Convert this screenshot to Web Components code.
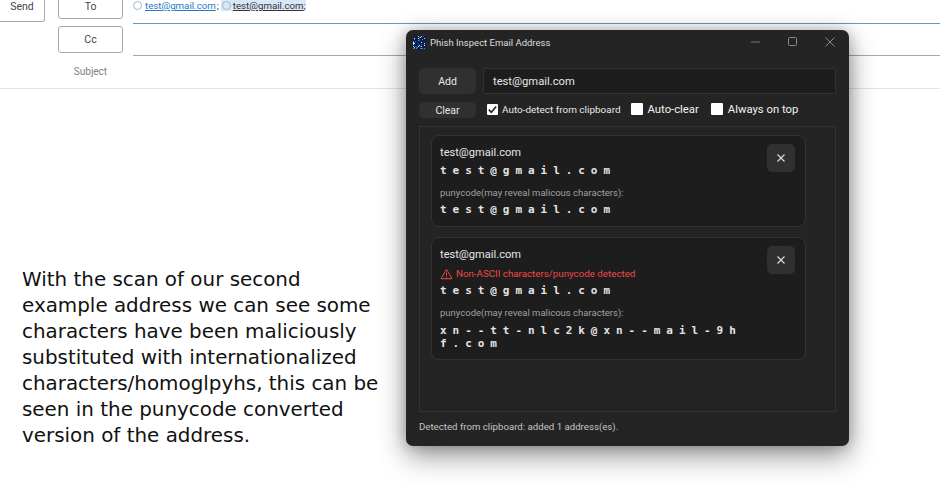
<!DOCTYPE html>
<html>
<head>
<meta charset="utf-8">
<title>Phish Inspect</title>
<style>
  html, body { margin: 0; height: 502px; overflow: hidden; background: #fff; }
  body { position: relative; font-family: Roboto, sans-serif; }
</style>
</head>
<body>
<mail-header></mail-header>
<note-text>With the scan of our second<br>example address we can see some<br>characters have been maliciously<br>substituted with internationalized<br>characters/homoglpyhs, this can be<br>seen in the punycode converted<br>version of the address.</note-text>

<app-window>
  <addr-card name="test@gmail.com" shown="test@gmail.com" puny="test@gmail.com"></addr-card>
  <addr-card warn name="test@gmail.com" shown="test@gmail.com" puny="xn--tt-nlc2k@xn--mail-9h f.com"></addr-card>
</app-window>

<script>
// Outlook compose header behind the app window
class MailHeader extends HTMLElement {
  connectedCallback() {
    const root = this.attachShadow({ mode: "open" });
    root.innerHTML = `
      <style>
        :host { display: block; height: 89px; box-sizing: border-box; border-bottom: 1px solid #e4e4e4;
          font: 10.5px Roboto, sans-serif; color: #444; overflow: hidden; }
        .wrap { display: grid; grid-template-columns: 45px 78px 1fr; margin-top: -8px; height: 97px; }
        .btn { box-sizing: border-box; border: 1px solid #a9a9a9; border-radius: 3px; background: #fff;
          display: flex; align-items: center; justify-content: center; }
        .send { height: 30px; border-left: 0; border-radius: 0 3px 3px 0; padding-top: 9px; padding-bottom: 10px; line-height: 9px; }
        .col { display: flex; flex-direction: column; align-items: center; padding-left: 13px; }
        .to { width: 65px; height: 27px; padding-top: 2px; }
        .cc { width: 65px; height: 27px; margin-top: 7px; }
        .subj { margin-top: 13px; color: #808080; font-size: 10px; }
        .lines { padding-left: 10px; }
        .row { height: 32px; box-sizing: border-box; border-bottom: 1px solid #5b9bd5;
          display: flex; align-items: flex-start; gap: 1px; font-size: 9.7px; padding: 8px 0 0; line-height: 11px; }
        .row2 { height: 32px; border-bottom: 1px solid #a8a8a8; }
        .dot { width: 7px; height: 7px; border: 1px solid #9fb6cc; border-radius: 50%; margin: 1px 0 0 0; }
        a { color: #1f78c8; text-decoration: underline; margin-left: 2px; }
        .sel { background: #d9e8f6; display: flex; align-items: flex-start; margin-left: 1px; padding-left: 1px; }
        .sel u { color: #333; margin-left: 2px; }
      </style>
      <div class="wrap">
        <div><div class="btn send">Send</div></div>
        <div class="col">
          <div class="btn to">To</div>
          <div class="btn cc">Cc</div>
          <div class="subj">Subject</div>
        </div>
        <div class="lines">
          <div class="row"><span class="dot"></span><a>test@gmail.com</a>;
            <span class="sel"><span class="dot"></span><u>test@gmail.com</u>;</span></div>
          <div class="row row2"></div>
        </div>
      </div>`;
  }
}

class NoteText extends HTMLElement {
  connectedCallback() {
    const root = this.attachShadow({ mode: "open" });
    root.innerHTML = `
      <style>
        :host { display: block; margin: 178px 0 0 22px; width: 370px;
          font: 19.9px/26px "DejaVu Sans", Verdana, sans-serif; color: #111; white-space: nowrap; }
      </style>
      <slot></slot>`;
  }
}

class UiCheck extends HTMLElement {
  connectedCallback() {
    const root = this.attachShadow({ mode: "open" });
    const on = this.hasAttribute("checked");
    root.innerHTML = `
      <style>
        :host { display: inline-flex; align-items: center; color: #e8e8e8; white-space: nowrap; }
        .box { box-sizing: border-box; background: #fff; border-radius: 1px; display: block; flex: none;
          width: var(--box, 12px); height: var(--box, 12px); margin-right: var(--gap, 5px); }
        svg { display: block; width: 100%; height: 100%; }
      </style>
      <span class="box">${on ? '<svg viewBox="0 0 12 12"><path d="M2 6.2 4.7 9 10 2.8" fill="none" stroke="#222" stroke-width="1.8"/></svg>' : ""}</span>
      <slot></slot>`;
  }
}

class AddrCard extends HTMLElement {
  connectedCallback() {
    const root = this.attachShadow({ mode: "open" });
    const warn = this.hasAttribute("warn");
    const name = this.getAttribute("name");
    const shown = this.getAttribute("shown");
    const puny = this.getAttribute("puny");
    root.innerHTML = `
      <style>
        :host { display: block; position: relative; box-sizing: border-box; width: 375px; background: #1d1d1d;
          border: 1px solid #333; border-radius: 8px; padding: 9px 8px 1px 8px; color: #e6e6e6; }
        .name { font-size: 11.1px; line-height: 16px; }
        .warn { font-size: 9.75px; line-height: 14px; color: #f04848; display: flex; align-items: center; gap: 3px; margin: 4px 0 0; }
        .warn svg { width: 13px; height: 12px; flex: none; }
        .mono { font: bold 11px/13px "DejaVu Sans Mono", monospace; letter-spacing: 5.95px; color: #e4e4e4; margin-top: 3px; width: 310px; word-break: break-all; }
        .lbl { font-size: 9.5px; line-height: 13px; color: #a0a0a0; margin-top: 9px; }
        .lbl + .mono { margin-top: 4px; padding-bottom: 9px; }
        :host([warn]) .lbl + .mono { margin-top: 5px; padding-bottom: 8px; }
        .x { position: absolute; top: 8px; right: 10px; width: 28px; height: 28px; border-radius: 5px; background: #303030;
          display: flex; align-items: center; justify-content: center; }
        .x svg { width: 8px; height: 8px; }
      </style>
      <div class="name">${name}</div>
      ${warn ? `<div class="warn"><svg viewBox="0 0 13 12"><path d="M6.5 1.3 12 10.7H1Z M6.5 4.6V7.8 M6.5 8.6V9.6" fill="none" stroke="#f04848" stroke-width="1"/></svg>Non-ASCII characters/punycode detected</div>` : ""}
      <div class="mono">${shown}</div>
      <div class="lbl">punycode(may reveal malicous characters):</div>
      <div class="mono">${puny}</div>
      <div class="x"><svg viewBox="0 0 8 8"><path d="M.5.5l7 7M7.5.5l-7 7" stroke="#ddd" stroke-width="1.1"/></svg></div>`;
  }
}

class AppWindow extends HTMLElement {
  connectedCallback() {
    const root = this.attachShadow({ mode: "open" });
    // speckles for the small app icon, scattered with a fixed little sequence
    let dots = "";
    const cols = ["#3f8fe8", "#9fd4ff", "#2a66c8", "#d5ecff", "#1c54ad"];
    let seed = 7;
    for (let i = 0; i < 46; i++) {
      seed = (seed * 137 + 59) % 251;
      const x = seed % 13;
      seed = (seed * 137 + 59) % 251;
      const y = seed % 13;
      dots += `<rect x="${x}" y="${y}" width="1" height="1" fill="${cols[i % 5]}"/>`;
    }
    root.innerHTML = `
      <style>
        :host { display: flex; flex-direction: column; position: absolute; left: 406px; top: 30px; width: 443px; height: 416px;
          box-sizing: border-box; background: #242424; border-radius: 7px; color: #e6e6e6;
          box-shadow: 0 10px 28px rgba(0,0,0,.42), 0 0 14px rgba(0,0,0,.22);
          font: 10.5px Roboto, sans-serif; }
        .title { display: flex; align-items: center; height: 24px; padding: 0 14px 0 7px; font-size: 9.5px; color: #ddd; }
        .title .ico { width: 13px; height: 13px; background: #0c1f44; margin-right: 4px; display: block; }
        .title .txt { flex: 1; }
        .ctl { width: 10px; height: 10px; margin-left: 27px; display: block; }
        .body { flex: 1; display: flex; flex-direction: column; padding: 14px 13px 0; min-height: 0; }
        .top { display: grid; grid-template-columns: 57px 1fr; column-gap: 7px; }
        .btn { background: #303030; border-radius: 5px; display: flex; align-items: center; justify-content: center; font-size: 10.5px; }
        .add { height: 26px; }
        .input { height: 26px; box-sizing: border-box; background: #1d1d1d; border: 1px solid #333; display: flex; align-items: center; padding-left: 9px; font-size: 11.2px; border-radius: 2px; }
        .opts { display: grid; grid-template-columns: 57px 1fr; column-gap: 11px; margin-top: 8px; align-items: start; }
        .clear { height: 16px; font-size: 10.5px; border-radius: 5px; }
        .checks { display: flex; align-items: center; height: 14px; }
        .checks .a { font-size: 9.95px; --box: 11px; --gap: 4px; margin-right: 10px; }
        .checks .b { font-size: 11.3px; color: #f2f2f2; margin-right: 12px; --gap: 5px; }
        .list { margin-top: 8px; height: 286px; box-sizing: border-box; border: 1px solid #333; padding: 8px 11px; display: flex; flex-direction: column; gap: 10px; }
        .status { margin-top: 9px; font-size: 9.67px; color: #c4c4c4; }
      </style>
      <div class="title">
        <svg class="ico" viewBox="0 0 13 13">${dots}</svg>
        <span class="txt">Phish Inspect Email Address</span>
        <svg class="ctl" viewBox="0 0 10 10"><path d="M0 5h9" stroke="#777" stroke-width="1"/></svg>
        <svg class="ctl" viewBox="0 0 10 10"><rect x=".5" y=".5" width="8" height="8" rx="1" fill="none" stroke="#888"/></svg>
        <svg class="ctl" viewBox="0 0 10 10"><path d="M.5.5l9 9M9.5.5l-9 9" stroke="#888" stroke-width="1"/></svg>
      </div>
      <div class="body">
        <div class="top">
          <div class="btn add">Add</div>
          <div class="input">test@gmail.com</div>
        </div>
        <div class="opts">
          <div class="btn clear">Clear</div>
          <div class="checks">
            <ui-check class="a" checked>Auto-detect from clipboard</ui-check>
            <ui-check class="b">Auto-clear</ui-check>
            <ui-check class="b">Always on top</ui-check>
          </div>
        </div>
        <div class="list"><slot></slot></div>
        <div class="status">Detected from clipboard: added 1 address(es).</div>
      </div>`;
  }
}

customElements.define("mail-header", MailHeader);
customElements.define("note-text", NoteText);
customElements.define("ui-check", UiCheck);
customElements.define("addr-card", AddrCard);
customElements.define("app-window", AppWindow);
</script>
</body>
</html>
